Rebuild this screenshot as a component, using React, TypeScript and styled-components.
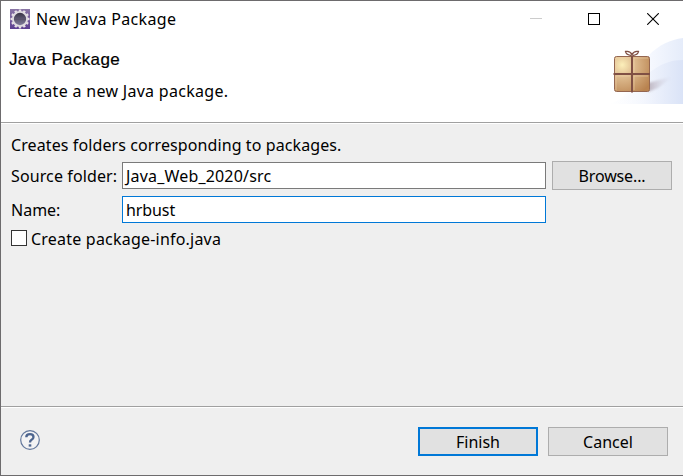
import React from "react";
import styled, { createGlobalStyle } from "styled-components";

const GlobalStyle = createGlobalStyle`
  * { box-sizing: border-box; }
  body { margin: 0; overflow: hidden; }
`;

const Window = styled.div`
  width: 683px;
  height: 476px;
  display: flex;
  flex-direction: column;
  background: #efefef;
  border: solid #6d6b6d;
  border-width: 1px 0 1px 1px;
  font-family: "Noto Sans", "Open Sans", sans-serif;
  font-size: 16px;
  line-height: 22px;
  color: #000;
`;

const Text = styled.span<{ $spacing?: number }>`
  white-space: pre;
  letter-spacing: ${(p) => p.$spacing ?? 0}px;
`;

const TitleBar = styled.header`
  height: 36px;
  flex: none;
  display: flex;
  align-items: center;
  background: #fff;
  padding: 0 1px 0 9px;
  gap: 6px;
`;

const WindowControls = styled.div`
  display: flex;
  margin-left: auto;
`;

const ControlButton = styled.button`
  width: 59px;
  height: 36px;
  padding: 0;
  border: 0;
  background: none;
  display: flex;
  align-items: center;
  justify-content: center;
`;

const MinimizeButton = styled(ControlButton)`
  padding-left: 2px;
`;

const Banner = styled.section`
  height: 87px;
  flex: none;
  display: flex;
  justify-content: space-between;
  background: #fff;
  border-bottom: 1px solid #fff;
  box-shadow: inset 0 -1px #a0a0a0;
`;

const BannerText = styled.div`
  display: flex;
  flex-direction: column;
  padding: 13px 0 0 8px;
`;

const BannerTitle = styled.h1`
  margin: 0;
  font: 400 17px/20px "Liberation Sans", Arial, sans-serif;
  letter-spacing: 0.35px;
  -webkit-text-stroke: 0.2px #000;
`;

const BannerMessage = styled.p`
  margin: 10px 0 0 8px;
`;

const Form = styled.main`
  flex: 1;
  padding: 10px 11px 0 10px;
`;

const FieldRow = styled.div<{ $top: number }>`
  display: grid;
  grid-template-columns: 111px 424px 120px;
  align-items: center;
  margin-top: ${(p) => p.$top}px;
`;

const Field = styled.div<{ $focused?: boolean }>`
  height: 27px;
  background: #fff;
  border: 1px solid ${(p) => (p.$focused ? "#0078d7" : "#7a7a7a")};
  padding: 1px 3px 0;
  display: flex;
  align-items: center;
`;

const PushButton = styled.button<{ $primary?: boolean }>`
  width: 120px;
  height: 29px;
  padding: 0;
  font: inherit;
  color: #000;
  background: #e1e1e1;
  border: ${(p) => (p.$primary ? "2px solid #0078d7" : "1px solid #adadad")};
  display: flex;
  align-items: center;
  justify-content: center;
`;

const BrowseButton = styled(PushButton)`
  margin-left: 6px;
`;

const CheckRow = styled.label`
  display: flex;
  align-items: flex-start;
  gap: 4px;
  margin-top: 5px;
`;

const CheckBox = styled.span`
  width: 16px;
  height: 16px;
  margin-top: 2px;
  background: #fff;
  border: 1px solid #333;
`;

const Footer = styled.footer`
  height: 69px;
  flex: none;
  display: flex;
  align-items: center;
  gap: 10px;
  padding: 1px 15px 0 19px;
  border-top: 1px solid #a0a0a0;
  box-shadow: inset 0 1px #fff;
`;

const HelpButton = styled.button`
  width: 20px;
  height: 20px;
  margin: 0 auto 3px 0;
  padding: 0;
  border: 0;
  background: none;
  display: flex;
`;

const AppIcon = () => {
  const teeth = Array.from({ length: 12 }, (_, i) => i * 30);
  return (
    <svg width="20" height="20" viewBox="0 0 20 20">
      <defs>
        <linearGradient id="appBg" x1="0" y1="0" x2="0" y2="1">
          <stop offset="0" stopColor="#8a76a5" />
          <stop offset="1" stopColor="#5d3f91" />
        </linearGradient>
        <linearGradient id="appCore" x1="0" y1="0" x2="0" y2="1">
          <stop offset="0" stopColor="#35303f" />
          <stop offset="1" stopColor="#8580a0" />
        </linearGradient>
      </defs>
      <rect width="20" height="20" fill="url(#appBg)" />
      {teeth.map((angle) => (
        <rect key={angle} x="8.8" y="0.5" width="2.4" height="3" fill="#e8e2e6" transform={`rotate(${angle} 10 10)`} />
      ))}
      <circle cx="10" cy="10" r="7.1" fill="url(#appCore)" stroke="#e0dce0" strokeWidth="1.9" />
      <path d="M4.2 8.5h11.6M4 10.5h12" stroke="#575067" strokeWidth=".6" />
    </svg>
  );
};

const PackageArt = () => (
  <svg width="83" height="68" viewBox="0 0 83 68">
    <defs>
      <linearGradient id="wave" x1="0" x2="1">
        <stop offset="0" stopColor="#fff" />
        <stop offset=".5" stopColor="#f8faff" />
        <stop offset="1" stopColor="#e5ecfa" />
      </linearGradient>
      <linearGradient id="waveFront" x1="0" x2="1">
        <stop offset="0" stopColor="#fff" stopOpacity="0" />
        <stop offset="1" stopColor="#dae3f7" />
      </linearGradient>
      <radialGradient id="box" cx=".22" cy=".24" r=".95">
        <stop offset="0" stopColor="#fcefba" />
        <stop offset=".35" stopColor="#dfbd91" />
        <stop offset="1" stopColor="#b98350" />
      </radialGradient>
      <linearGradient id="shade" x1="0" x2="1">
        <stop offset="0" stopColor="#a1919e" stopOpacity=".65" />
        <stop offset="1" stopColor="#d8dced" stopOpacity="0" />
      </linearGradient>
      <filter id="soft"><feGaussianBlur stdDeviation="1" /></filter>
    </defs>
    <path d="M8 67C36 60 30 36 48 19C60 7 70 3 83 1V67Z" fill="url(#wave)" />
    <path d="M8 67C38 60 40 41 53 33C63 26 72 23 83 23V67Z" fill="url(#waveFront)" />
    <path d="M48 46L74 39L58 51L48 55Z" fill="url(#shade)" filter="url(#soft)" />
    <rect x="14.500" y="19.500" width="35" height="35" rx="2" fill="url(#box)" stroke="#946650" />
    <path d="M16 36V21H30M34 36V21H48M16 53V39H30M34 53V39H48" fill="none" stroke="#f0d5ad" strokeOpacity=".55" />
    <path d="M13.500 37H50M32 19V55.500" stroke="#805044" strokeWidth="2" />
    <path d="M31.500 18.500Q26 18 25.500 14.500Q30 13.500 32 17.500Q34 13.500 38.500 14.500Q38 18 32.500 18.500" fill="#fff" stroke="#805044" strokeWidth="1.3" />
  </svg>
);

export default function App() {
  return (
    <>
      <GlobalStyle />
      <Window>
        <TitleBar>
          <AppIcon />
          <Text $spacing={0.34}>New Java Package</Text>
          <WindowControls>
            <MinimizeButton aria-label="Minimize">
              <svg width="12" height="12"><path d="M0 5.500H12" stroke="#ccc" /></svg>
            </MinimizeButton>
            <ControlButton aria-label="Maximize">
              <svg width="12" height="12"><rect x=".5" y=".5" width="11" height="11" fill="none" stroke="#000" /></svg>
            </ControlButton>
            <ControlButton aria-label="Close">
              <svg width="12" height="12"><path d="M.2.2L11.800 11.800M11.800.2L.2 11.800" stroke="#000" strokeWidth="1.1" /></svg>
            </ControlButton>
          </WindowControls>
        </TitleBar>
        <Banner>
          <BannerText>
            <BannerTitle>Java Package</BannerTitle>
            <BannerMessage><Text $spacing={0.3}>Create a new Java package.</Text></BannerMessage>
          </BannerText>
          <PackageArt />
        </Banner>
        <Form>
          <Text $spacing={0.1}>Creates folders corresponding to packages.</Text>
          <FieldRow $top={5}>
            <Text $spacing={0.12}>Source folder:</Text>
            <Field><Text $spacing={0.18}>Java_Web_2020/src</Text></Field>
            <BrowseButton><Text $spacing={-0.15}>Browse...</Text></BrowseButton>
          </FieldRow>
          <FieldRow $top={6}>
            <Text>Name:</Text>
            <Field $focused><Text $spacing={-0.1}>hrbust</Text></Field>
          </FieldRow>
          <CheckRow>
            <CheckBox />
            <Text $spacing={0.21}>Create package-info.java</Text>
          </CheckRow>
        </Form>
        <Footer>
          <HelpButton aria-label="Help">
            <svg width="20" height="20" viewBox="0 0 20 20">
              <circle cx="10" cy="10" r="9.3" fill="#f3f3f4" stroke="#62779c" strokeWidth="1.2" />
              <path d="M6.300 7.200Q6.300 4.200 10 4.200Q13.500 4.200 13.500 7Q13.500 8.600 11.600 9.700Q10 10.600 10 12.500" fill="none" stroke="#4d658f" strokeWidth="2.300" />
              <rect x="8.700" y="14.300" width="2.600" height="2.300" fill="#4d658f" />
            </svg>
          </HelpButton>
          <PushButton $primary><Text>Finish</Text></PushButton>
          <PushButton><Text>Cancel</Text></PushButton>
        </Footer>
      </Window>
    </>
  );
}
